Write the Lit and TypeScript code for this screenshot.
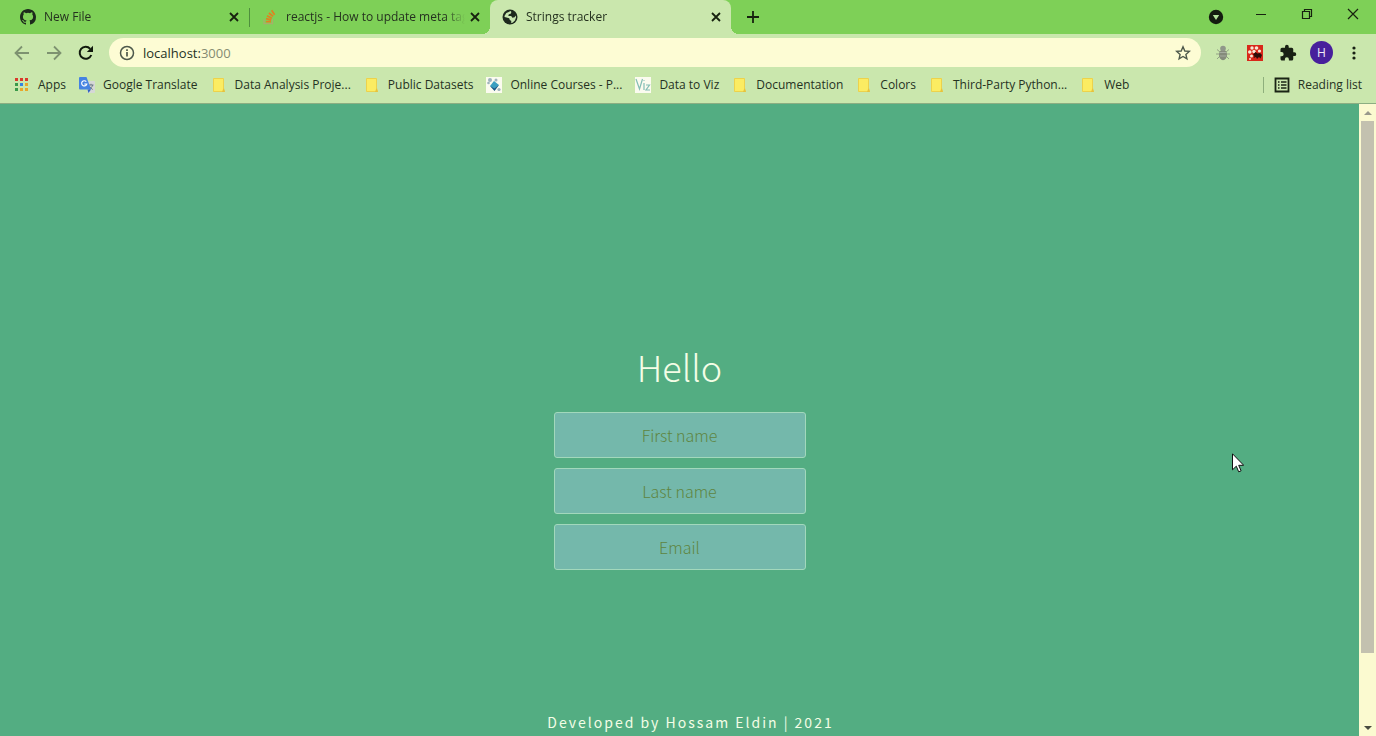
import { LitElement, html, css, svg } from "lit";
import { customElement } from "lit/decorators.js";

const github = svg`<svg viewBox="0 0 16 16" width="16" height="16"><path fill="#1d2a1c" d="M8 0C3.58 0 0 3.58 0 8c0 3.54 2.29 6.53 5.47 7.59.4.07.55-.17.55-.38 0-.19-.01-.82-.01-1.49-2.01.37-2.53-.49-2.69-.94-.09-.23-.48-.94-.82-1.13-.28-.15-.68-.52-.01-.53.63-.01 1.08.58 1.23.82.72 1.21 1.87.87 2.33.66.07-.52.28-.87.51-1.07-1.78-.2-3.64-.89-3.64-3.95 0-.87.31-1.59.82-2.15-.08-.2-.36-1.02.08-2.12 0 0 .67-.21 2.2.82a7.6 7.6 0 0 1 4 0c1.53-1.04 2.2-.82 2.2-.82.44 1.1.16 1.92.08 2.12.51.56.82 1.27.82 2.15 0 3.07-1.87 3.75-3.65 3.95.29.25.54.73.54 1.48 0 1.07-.01 1.93-.01 2.2 0 .21.15.46.55.38A8.01 8.01 0 0 0 16 8c0-4.42-3.58-8-8-8z"/></svg>`;
const stack = svg`<svg viewBox="0 0 16 16" width="16" height="16" fill="none"><path d="M2 10v4.700h8.500V10" stroke="#a9ac6c" stroke-width="1.200"/><g stroke="#e0821f" stroke-width="1.700"><path d="M3.800 12.600h5.200M4 9.700l5.200 1.100M5 6.800l4.900 2.400M6.900 4l4.200 3.400M9.600 1.300l3 4.500"/></g></svg>`;
const globe = svg`<svg viewBox="0 0 16 16" width="16" height="16"><circle cx="8" cy="8" r="7.500" fill="#1e2a1e"/><path fill="#c8e7b0" d="M8.600 2.100 9.400 3 8.700 4.700 6.800 5.300l-.5 1.600 2.900.1 1.200 1.700 2.200-.4.900-1.800.6 1.800-1.200 3.200-2.400 2.200-1.600.1.500-1.800-1.600-.9-.6-1.800-2.700-.8-1.900-.4-.1-1.100 1.800-2.900z"/><path fill="#1e2a1e" d="m10.400 2.600 2.400 1.900-.6 1.200-1.900-.7z"/></svg>`;
const close = svg`<svg viewBox="0 0 10 10" width="10" height="10"><path d="m1 1 8 8M9 1 1 9" stroke="#17220f" stroke-width="1.800"/></svg>`;
const plus = svg`<svg viewBox="0 0 12 12" width="12" height="12"><path d="M6 0v12M0 6h12" stroke="#17220f" stroke-width="1.800"/></svg>`;
const back = svg`<svg viewBox="0 0 16 16" width="16" height="16" fill="none" stroke="#7d9270" stroke-width="1.800"><path d="M15 8H2M8 1.500 1.500 8 8 14.500"/></svg>`;
const forward = svg`<svg viewBox="0 0 16 16" width="16" height="16" fill="none" stroke="#7d9270" stroke-width="1.800"><path d="M1 8h13M8 1.500 14.500 8 8 14.500"/></svg>`;
const reload = svg`<svg viewBox="0 0 16 16" width="16" height="16"><path d="M13.300 10A6 6 0 1 1 12.200 3.800" fill="none" stroke="#11190d" stroke-width="2"/><path d="M15 .8v6.200H8.800z" fill="#11190d"/></svg>`;
const info = svg`<svg viewBox="0 0 16 16" width="16" height="16"><circle cx="8" cy="8" r="6.500" fill="none" stroke="#4d584b" stroke-width="1.500"/><path d="M8 7v4.500M8 4.300v1.700" stroke="#4d584b" stroke-width="1.700"/></svg>`;
const star = svg`<svg viewBox="0 0 16 16" width="16" height="16"><path d="m8 1.800 1.800 4.200 4.500.4-3.400 3 1 4.400L8 11.500l-3.900 2.300 1-4.400-3.400-3 4.500-.4z" fill="none" stroke="#4d584b" stroke-width="1.400"/></svg>`;
const bug = svg`<svg viewBox="0 0 16 16" width="16" height="16"><path d="M2 4.500 5 7M14 4.500 11 7M1 9h14M2 14l3-3M14 14l-3-3" stroke="#94a286" fill="none"/><ellipse cx="8" cy="9.800" rx="4" ry="5.400" fill="#858b7b"/><circle cx="8" cy="3.500" r="2.800" fill="#90978a"/><path d="M5 7.500h6M5 11h6" stroke="#a6aca0"/></svg>`;
const redExt = svg`<svg viewBox="0 0 16 16" width="16" height="16"><path fill="#d9281a" d="M0 0h16v16H0z"/><g fill="#f7e9d5"><circle cx="5" cy="3" r="1.700"/><circle cx="9.500" cy="3" r="1.800"/><circle cx="2.800" cy="7" r="1.800"/><circle cx="7" cy="6.500" r="1.700"/><circle cx="12.500" cy="6" r="1.600"/><circle cx="4.500" cy="11" r="1.500"/><circle cx="3" cy="14" r="1"/></g><path fill="#2c0d08" d="M6 9.500 8.500 7l2 1.500 2.500-.5 2 2-1.500 3.500-1.500-1.500-2 2-1-2-2.500 1 1-2z"/></svg>`;
const puzzle = svg`<svg viewBox="0 0 24 24" width="18" height="18"><path fill="#182014" d="M20.500 11H19V7a2 2 0 0 0-2-2h-4V3.500a2.500 2.500 0 0 0-5 0V5H4a2 2 0 0 0-2 2v3.800h1.500a2.700 2.700 0 0 1 0 5.400H2V20c0 1.100.9 2 2 2h3.800v-1.500a2.700 2.700 0 0 1 5.400 0V22H17a2 2 0 0 0 2-2v-4h1.500a2.500 2.500 0 0 0 0-5z"/></svg>`;
const dots = svg`<svg viewBox="0 0 16 16" width="16" height="16" fill="#182014"><circle cx="8" cy="3" r="1.600"/><circle cx="8" cy="8" r="1.600"/><circle cx="8" cy="13" r="1.600"/></svg>`;
const apps = svg`<svg viewBox="0 0 16 16" width="16" height="16"><path fill="#d93a2b" d="M1 1h3v3H1zM6 1h3v3H6zM11 1h3v3h-3z"/><path fill="#3a9a4a" d="M1 6h3v3H1zM1 11h3v3H1z"/><path fill="#3384e0" d="M6 6h3v3H6z"/><path fill="#e8a72a" d="M11 6h3v3h-3zM6 11h3v3H6zM11 11h3v3h-3z"/></svg>`;
const translate = svg`<svg viewBox="0 0 16 16" width="16" height="16"><path fill="#d5d8d6" d="M6 4h9a1 1 0 0 1 1 1v10a1 1 0 0 1-1 1H9z"/><path d="M9.500 8h5M12 6.800V8M13.700 8c-.5 2-2 3.500-3.500 4.300M10.700 9.500c.7 1.300 1.700 2.300 3 3" stroke="#6c7b88" fill="none"/><path fill="#4583e2" d="M1 0h6.500L12 12.500H1a1 1 0 0 1-1-1V1a1 1 0 0 1 1-1z"/><path fill="#2f63c0" d="m8.500 12.500 3.500 0L9.500 16z"/><path d="M7.300 4.700A2.600 2.600 0 1 0 7.800 7H5.300" stroke="#fff" stroke-width="1.200" fill="none"/></svg>`;
const folder = svg`<svg viewBox="0 0 16 16" width="16" height="16"><path fill="#fbec62" stroke="#ecd24c" d="M2.500 1.500h10v9.500l1 3.500h-11z"/><path fill="#e6c23e" d="m12.500 11 1.500 4h-3z"/></svg>`;
const courses = svg`<svg viewBox="0 0 16 16" width="16" height="16"><path fill="#fbfbef" d="M0 0h16v16H0z"/><g fill="#9eb2bd"><circle cx="4" cy="3" r="2"/><circle cx="10" cy="3" r="1.500"/><circle cx="2.500" cy="6" r="1.300"/><circle cx="13" cy="12.500" r="1.600"/></g><path fill="#3b9fc0" d="m8 4 5 4-4.500 5L4 9z"/><path fill="#1e5785" d="m4 9 4.500 2.500L13 8l-4.500 6z"/></svg>`;
const viz = svg`<svg viewBox="0 0 16 16" width="16" height="16"><path fill="#fbfbef" d="M0 0h16v16H0z"/><path d="m1 2 3.500 10L7.500 2M9 6v7M8.500 3.500h1M11 8h3.500L11 13h4" stroke="#83bdb5" stroke-width="1.200" fill="none"/></svg>`;
const reading = svg`<svg viewBox="0 0 16 16" width="16" height="16"><path d="M1.500 1.500h13v13h-13z" fill="none" stroke="#1a2415" stroke-width="1.800"/><path d="M4 5h1.500M4 8h1.500M4 11h1.500M7 5h5.500M7 8h5.500M7 11h5.500" stroke="#1a2415" stroke-width="1.500"/></svg>`;
const badge = svg`<svg viewBox="0 0 16 16" width="16" height="16"><circle cx="8" cy="8" r="7.200" fill="#141c10"/><path d="M4.800 6h6.400L8 11z" fill="#b4e29c"/></svg>`;
const minimize = svg`<svg viewBox="0 0 12 12" width="12" height="12"><path d="M1 6.500h10" stroke="#17220f"/></svg>`;
const restore = svg`<svg viewBox="0 0 12 12" width="12" height="12"><path d="M1.500 3.500h7v7h-7zM3.500 3.500v-2h7v7h-2" fill="none" stroke="#17220f" stroke-width="1.200"/></svg>`;
const windowClose = svg`<svg viewBox="0 0 12 12" width="12" height="12"><path d="m1 1 10 10M11 1 1 11" stroke="#17220f" stroke-width="1.200"/></svg>`;

const tabs = [
  { icon: github, title: "New File", active: false },
  { icon: stack, title: "reactjs - How to update meta tags", active: false },
  { icon: globe, title: "Strings tracker", active: true },
];

const bookmarks = [
  { icon: apps, title: "Apps" },
  { icon: translate, title: "Google Translate" },
  { icon: folder, title: "Data Analysis Proje..." },
  { icon: folder, title: "Public Datasets" },
  { icon: courses, title: "Online Courses - P..." },
  { icon: viz, title: "Data to Viz" },
  { icon: folder, title: "Documentation" },
  { icon: folder, title: "Colors" },
  { icon: folder, title: "Third-Party Python..." },
  { icon: folder, title: "Web" },
];

@customElement("browser-chrome")
export class BrowserChrome extends LitElement {
  static styles = css`
    :host { display: block; color: #25321f; font: 12px/16px "Open Sans", "Noto Sans", sans-serif; }
    * { box-sizing: border-box; }
    svg { display: block; flex: none; }
    button { display: grid; place-items: center; padding: 0; border: 0; background: none; color: inherit; font: inherit; }
    .strip { display: flex; height: 34px; background: #7ed057; }
    .tab { position: relative; display: flex; align-items: center; flex: 0 1 241px; min-width: 0; gap: 8px; padding: 0 9px 0 12px; }
    .tab:first-child { flex-basis: 249px; padding-left: 20px; }
    .tab + .tab:not(.active) { border-left: 1px solid #4f8f3d; border-image: linear-gradient(transparent 25%, #4f8f3d 25% 78%, transparent 78%) 1; }
    .active { background: #cae7ad; border-radius: 8px 8px 0 0; }
    .active::before, .active::after { content: ""; position: absolute; bottom: 0; width: 8px; height: 8px; }
    .active::before { left: -8px; background: radial-gradient(circle at 0 0, transparent 8px, #cae7ad 8px); }
    .active::after { right: -8px; background: radial-gradient(circle at 100% 0, transparent 8px, #cae7ad 8px); }
    .title { flex: 1; margin-right: -4px; overflow: hidden; white-space: nowrap; mask-image: linear-gradient(to right, #000 calc(100% - 20px), transparent); }
    .close { width: 12px; height: 16px; }
    .new { width: 44px; }
    .controls { display: flex; align-items: center; margin-left: auto; padding-bottom: 6px; }
    .controls button { width: 46px; }
    .controls .search { padding-top: 5px; width: 44px; }
    .bar { display: flex; align-items: center; height: 37px; gap: 16px; padding: 0 14px; background: #cae7ad; }
    .url { display: flex; align-items: center; flex: 1; height: 29px; gap: 8px; margin-left: -1px; padding: 0 10px; border-radius: 15px; background: #fdfcd4; }
    .address { flex: 1; display: grid; }
    .field { width: 100%; padding: 0; border: 0; outline: 0; background: none; color: transparent; font: inherit; }
    .shown, .field { grid-area: 1 / 1; font-size: 13px; line-height: 20px; }
    .shown { pointer-events: none; }
    .port { color: #848b72; }
    .extensions { display: flex; align-items: center; gap: 16px; margin-left: -2px; }
    .avatar { width: 23px; height: 23px; margin: 0 -3px; border-radius: 50%; background: #47209c; color: #f2edf8; }
    .marks { display: flex; align-items: center; height: 33px; gap: 13px; padding: 0 14px 4px; border-bottom: 1px solid #8cae82; background: #cae7ad; }
    .mark { display: flex; align-items: center; gap: 8px; color: inherit; text-decoration: none; white-space: nowrap; }
    .reading { display: flex; align-items: center; gap: 8px; margin-left: auto; padding-left: 10px; border-left: 1px solid #8eaf7c; white-space: nowrap; }
  `;

  render() {
    return html`
      <div class="strip">
        ${tabs.map((t) => html`
          <div class="tab ${t.active ? "active" : ""}">
            ${t.icon}<span class="title">${t.title}</span>
            <button class="close" aria-label="Close tab">${close}</button>
          </div>`)}
        <button class="new" aria-label="New tab">${plus}</button>
        <div class="controls">
          <button class="search" aria-label="Search tabs">${badge}</button>
          <button aria-label="Minimize">${minimize}</button>
          <button aria-label="Restore">${restore}</button>
          <button aria-label="Close">${windowClose}</button>
        </div>
      </div>
      <div class="bar">
        <button aria-label="Back">${back}</button>
        <button aria-label="Forward">${forward}</button>
        <button aria-label="Reload">${reload}</button>
        <div class="url">
          ${info}
          <div class="address">
            <input class="field" aria-label="Address" />
            <span class="shown">localhost:<span class="port">3000</span></span>
          </div>
          <button aria-label="Bookmark this page">${star}</button>
        </div>
        <div class="extensions">
          <button aria-label="Bug extension">${bug}</button>
          <button aria-label="Red extension">${redExt}</button>
          <button aria-label="Extensions">${puzzle}</button>
          <button class="avatar" aria-label="Profile">H</button>
          <button aria-label="Menu">${dots}</button>
        </div>
      </div>
      <nav class="marks">
        ${bookmarks.map((b) => html`<a class="mark" href="#">${b.icon}<span>${b.title}</span></a>`)}
        <button class="reading">${reading}<span>Reading list</span></button>
      </nav>
    `;
  }
}

@customElement("greeting-page")
export class GreetingPage extends LitElement {
  static styles = css`
    :host { display: flex; flex-direction: column; align-items: center; color: #f4fde6; background: #53ad82; font-family: "Noto Sans CJK JP", "Open Sans", sans-serif; }
    * { box-sizing: border-box; }
    .main { display: flex; flex-direction: column; flex: 1; align-items: center; justify-content: center; padding-top: 96px; }
    .title { margin: 0 0 22px; font-size: 36px; line-height: 48px; font-weight: 200; }
    .form { display: grid; gap: 10px; }
    .field { width: 252px; height: 46px; padding: 0 15px; border: 1px solid #a2d8bc; border-radius: 3px; outline: 0; background: #74b8ab; color: #fff; font-family: inherit; font-size: 16px; font-weight: 300; text-align: center; }
    .field::placeholder { color: #5f8540; opacity: 1; }
    .footer { padding: 0 0 3px 22px; font-size: 14px; line-height: 22px; letter-spacing: 2px; }
  `;

  render() {
    return html`
      <div class="main">
        <h1 class="title">Hello</h1>
        <form class="form">
          ${["First name", "Last name", "Email"].map(
            (p) => html`<input class="field" type=${p === "Email" ? "email" : "text"} placeholder=${p} aria-label=${p} />`,
          )}
        </form>
      </div>
      <footer class="footer">Developed by Hossam Eldin | 2021</footer>
    `;
  }
}

@customElement("app-root")
export class AppRoot extends LitElement {
  static styles = css`
    :host { position: relative; display: flex; flex-direction: column; height: 100vh; overflow: hidden; }
    .view { display: flex; flex: 1; min-height: 0; }
    .page { flex: 1; }
    .scroll { box-sizing: border-box; display: flex; flex-direction: column; width: 17px; padding: 0 2px; background: #fbfad0; }
    .arrow { display: grid; place-items: center; height: 17px; flex: none; }
    .track { flex: 1; }
    .thumb { height: 89%; background: #c3c1af; }
    .cursor { position: absolute; left: 1232px; top: 453px; }
  `;

  render() {
    return html`
      <browser-chrome></browser-chrome>
      <div class="view">
        <greeting-page class="page"></greeting-page>
        <div class="scroll" aria-hidden="true">
          <div class="arrow"><svg viewBox="0 0 8 4" width="8" height="4"><path d="M0 4h8L4 0z" fill="#99998c" /></svg></div>
          <div class="track"><div class="thumb"></div></div>
          <div class="arrow"><svg viewBox="0 0 8 4" width="8" height="4"><path d="M0 0h8L4 4z" fill="#484b40" /></svg></div>
        </div>
      </div>
      <svg class="cursor" viewBox="0 0 12 20" width="12" height="20"><path d="M.5.800v16L4.300 13.200l2.400 5.600 2.400-1-2.400-5.500h5z" fill="#fff" stroke="#111" /></svg>
    `;
  }
}
